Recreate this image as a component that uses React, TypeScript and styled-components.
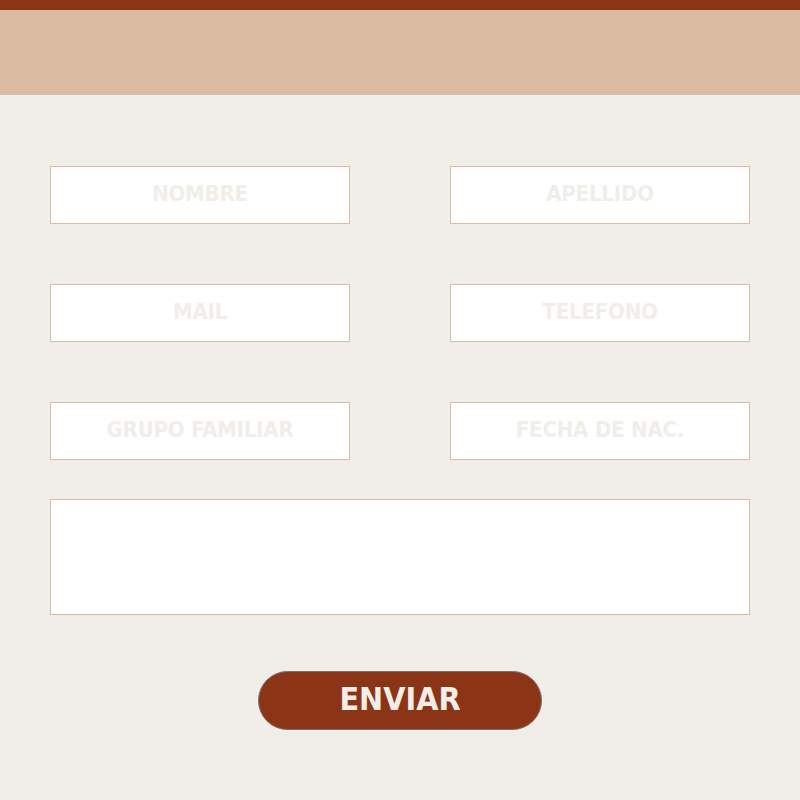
import React from 'react';
import styled, { createGlobalStyle } from 'styled-components';

const GlobalStyle = createGlobalStyle`
  body {
    margin: 0;
    background: #f1ede8;
    font-family: "DejaVu Sans Condensed", "DejaVu Sans", sans-serif;
  }
`;

const fields = [
  'NOMBRE',
  'APELLIDO',
  'MAIL',
  'TELEFONO',
  'GRUPO FAMILIAR',
  'FECHA DE NAC.',
];

const App = () => {
  return (
    <>
      <GlobalStyle />
      <Page>
        <TopStripe />
        <Header />
        <Form onSubmit={(e) => e.preventDefault()}>
          <Grid>
            {fields.map((f) => (
              <Field key={f} placeholder={f} />
            ))}
          </Grid>
          <Message />
          <SendButton type="submit">ENVIAR</SendButton>
        </Form>
      </Page>
    </>
  );
};

// Styling -------

const Page = styled.div`
  min-height: 800px;
  background: #f1ede8;
`;

const TopStripe = styled.div`
  height: 10px;
  background: #8b3416;
`;

const Header = styled.header`
  height: 85px;
  background: #dbbca3;
`;

const Form = styled.form`
  display: flex;
  flex-direction: column;
  align-items: center;
  padding: 71px 50px 0;
`;

const Grid = styled.div`
  width: 100%;
  display: grid;
  grid-template-columns: 300px 300px;
  justify-content: space-between;
  row-gap: 60px;
`;

const Field = styled.input`
  box-sizing: border-box;
  height: 58px;
  width: 100%;
  padding: 0 0 4px;
  border: 1px solid #dbbca3;
  background: #fff;
  text-align: center;
  font-family: "DejaVu Sans Condensed", "DejaVu Sans", sans-serif;
  font-weight: bold;
  font-size: 22px;
  letter-spacing: -0.2px;
  color: #8b3416;
  outline: none;
  &::placeholder {
    color: #f1ede8;
  }
`;

const Message = styled.textarea`
  box-sizing: border-box;
  width: 100%;
  height: 116px;
  margin-top: 39px;
  border: 1px solid #dbbca3;
  background: #fff;
  resize: none;
  outline: none;
`;

const SendButton = styled.button`
  margin-top: 56px;
  width: 284px;
  height: 59px;
  padding: 0 0 3px;
  border-radius: 30px;
  border: 1px solid #7a6e68;
  background: #8b3416;
  color: #f1ede8;
  font-family: "DejaVu Sans Condensed", "DejaVu Sans", sans-serif;
  font-weight: bold;
  font-size: 32px;
  cursor: pointer;
`;

export default App;
